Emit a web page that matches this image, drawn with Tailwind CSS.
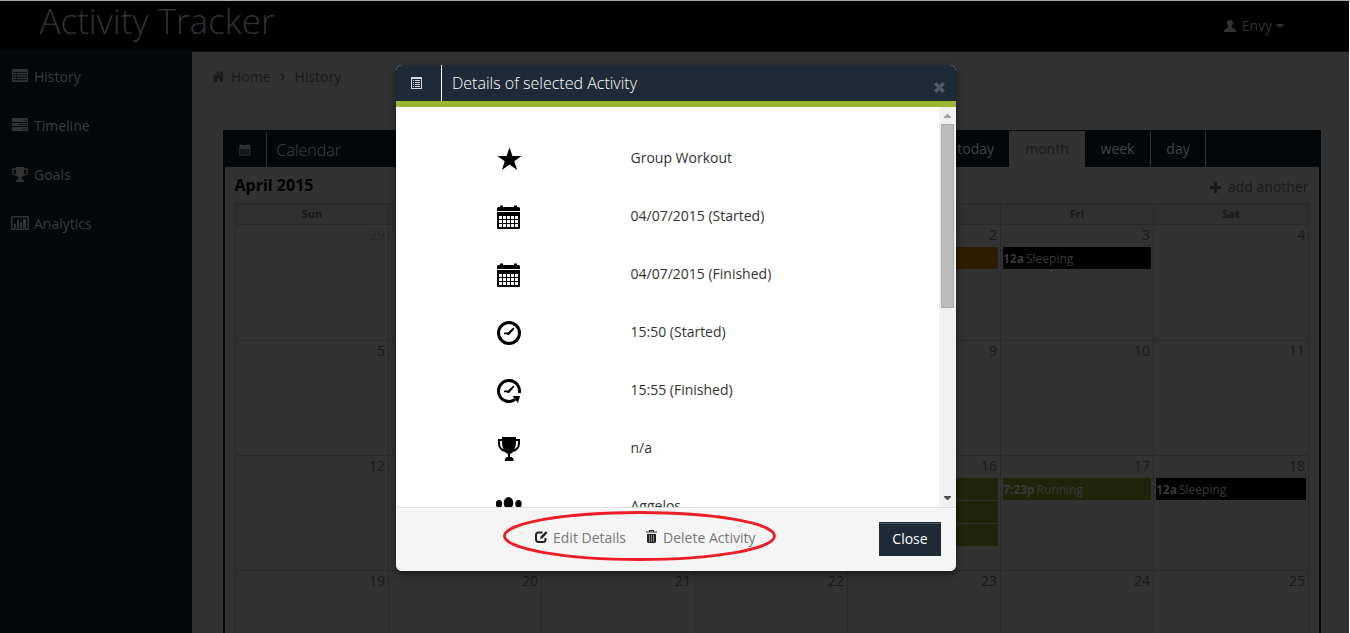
<!DOCTYPE html>
<html lang="en">
<head>
<meta charset="utf-8">
<title>Activity Tracker</title>
<script src="https://cdn.jsdelivr.net/npm/@tailwindcss/browser@4"></script>
</head>
<body class="bg-white">
<svg class="hidden">
  <symbol id="cal" viewBox="0 0 24 25"><path fill-rule="evenodd" d="M0 3.500Q0 2 1.500 2H3V.5h3V2h11V.5h3V2h1.500Q23 2 23 3.500V6H0zM0 7h23v16q0 1-1 1H1q-1 0-1-1zM2 11v3h3v-3zm4 0v3h3v-3zm4 0v3h3v-3zm4 0v3h3v-3zm4 0v3h3v-3zM2 15v3h3v-3zm4 0v3h3v-3zm4 0v3h3v-3zm4 0v3h3v-3zm4 0v3h3v-3zM2 19v3h3v-3zm4 0v3h3v-3zm4 0v3h3v-3zm4 0v3h3v-3zm4 0v3h3v-3z"/></symbol>
  <symbol id="cup" viewBox="0 0 24 24"><path fill-rule="evenodd" d="M5 0h14v2h4v4c0 5-3 8-7 9-.7.800-1.500 1.500-3 2v3h1.500q1 0 1.500 1.500h.5V24H8v-2.500h.5Q9 20 10 20h1v-3c-1.500-.5-2.300-1.200-3-2C4 14 1 11 1 6V2h4zM5 4H3v2c0 3 1.200 5.300 3.600 6.400C5.300 10 5 7 5 4zM19 4c0 3-.3 6-1.600 8.400C19.800 11.300 21 9 21 6V4z"/></symbol>
</svg>
<div class="relative flex h-[633px] w-[1350px] flex-col overflow-hidden bg-white font-['Open_Sans',sans-serif] text-sm">
  <div class="h-px bg-[#a9a9a9]"></div>
  <header class="mr-px flex h-[51px] shrink-0 justify-between border-b border-[#111] bg-black text-[#333]">
    <div class="pl-[39.500px] text-[35px] leading-[39px] font-light">Activity Tracker</div>
    <div class="mr-[65px] flex items-center"><svg class="mr-1.5 h-3 w-3" viewBox="0 0 12 12" fill="#333"><path d="M6 0c2 0 3 1.300 3 3 0 1.500-.6 2.600-1.500 3.600v1C9 8.500 12 9 12 10.500V12H0v-1.500C0 9 3 8.500 4.500 7.600v-1C3.600 5.600 3 4.500 3 3c0-1.700 1-3 3-3z"/></svg><span>Envy</span><span class="ml-1 border-x-4 border-t-4 border-x-transparent border-t-[#333]"></span></div>
  </header>
  <div class="mr-px flex min-h-0 flex-1">
    <nav class="flex w-48 shrink-0 flex-col bg-[#03070a] text-[#3c3c3c]">
      <a class="flex h-[49px] items-center gap-[5px] pl-3"><svg class="mb-0.5 h-[13px] w-[17px]" viewBox="0 0 17 13" fill="#333"><path fill-rule="evenodd" d="M1 0h14l1 1v11l-1 1H1l-1-1V1zM1.500 3.300v8h13v-8z"/><path d="M2 4h2v1.500H2zm2.500 0H14v1.500H4.500zM2 6.300h2v1.500H2zm2.500 0H14v1.500H4.500zM2 8.700h2v1.500H2zm2.500 0H14v1.500H4.500z"/></svg>History</a>
      <a class="flex h-[49px] items-center gap-[5px] pl-3"><svg class="mb-0.5 h-[13px] w-[17px]" viewBox="0 0 17 13" fill="#333"><path fill-rule="evenodd" d="M0 0h16v4H0zm12 1.700v.8h3v-.8zM0 5h16v3H0zm6 1v.8h9V6zM0 9h16v4H0zm10 1.800v.8h5v-.8z"/></svg>Timeline</a>
      <a class="flex h-[49px] items-center gap-[5px] pl-3"><svg class="h-[15px] w-[17px]" viewBox="0 0 17 15" fill="#333"><path fill-rule="evenodd" d="M4 0h8v1.500h4V4c0 3-2 4.700-5 5-.4.700-1 1.200-1.700 1.500V12Q12 12 12 14v1H4v-1q0-2 2.700-2v-1.500C6 10.200 5.400 9.700 5 9 2 8.700 0 7 0 4V1.500h4zM4 3H1.500v1c0 1.700 1 2.900 2.800 3.400C4 6.300 4 5 4 3zm8 0c0 2 0 3.300-.3 4.400C13.500 6.900 14.500 5.700 14.500 4V3z"/></svg>Goals</a>
      <a class="flex h-[49px] items-center gap-[4px] pl-[11px]"><svg class="mb-0.5 h-[14px] w-[19px]" viewBox="0 0 19 14" fill="#333"><path fill-rule="evenodd" d="M1 0h16l1 1v12l-1 1H1l-1-1V1zM1.500 1.500v11h15v-11z"/><path d="M3 8h2v4H3zm3-4h2v8H6zm3 2h2v6H9zm3-3h3v9h-3z"/></svg>Analytics</a>
    </nav>
    <main class="min-w-0 flex-1 bg-[#323232] text-[#191919]">
      <div class="flex h-[49px] items-center pl-5"><svg class="mr-1.5 h-[11px] w-[13px]" viewBox="0 0 13 11" fill="#191919"><path d="M6.500 0 9 2.200V.6h2v3.300l2 1.800-.7.800-5.800-5-5.800 5-.7-.8zM6.500 2.700 11 6.600V11H7.700V7.500H5.300V11H2V6.600z"/></svg>Home<svg class="mr-2.5 ml-[9px] h-2 w-[5px]" viewBox="0 0 5 8" fill="none" stroke="#191919" stroke-width="1.300"><path d="m1 .5 3 3.500-3 3.500"/></svg>History</div>
      <section class="mt-[29px] ml-[31px] flex h-[520px] w-[1098px] flex-col border-x-2 border-[#03070a]">
        <div class="flex h-[37px] shrink-0 bg-[#03070a] text-[#444]">
          <div class="mt-[2px] flex w-[42px] items-center justify-center border-r border-[#333]"><svg class="mr-px h-3 w-3" fill="#333"><use href="#cal"/></svg></div>
          <div class="flex-1 pl-[9.500px] text-base leading-[40px] font-light">Calendar</div>
          <div class="mt-px flex text-[#444]"><div class="w-[67px] pr-[15px] text-right leading-[36px]">today</div><div class="w-[76px] bg-[#323232] text-center leading-[36px] text-[#191919]">month</div><div class="h-[35px] w-[66px] border-r border-[#333] text-center leading-[36px]">week</div><div class="h-[35px] w-[55px] border-r border-[#333] text-center leading-[36px]">day</div></div>
          <div class="w-[113px]"></div>
        </div>
        <div class="flex h-9 shrink-0 justify-between pr-[10.500px] pl-[9.500px]"><b class="text-base leading-[36px] font-bold text-black">April 2015</b><span class="flex items-center pt-1"><svg class="mr-[7px] h-[11px] w-[11px]" viewBox="0 0 11 11" fill="#191919"><path d="M4 0h3v4h4v3H7v4H4V7H0V4h4z"/></svg>add another</span></div>
        <div class="ml-[10px] w-[1074px] border-t border-l border-[#292929]">
          <div class="grid h-[21px] grid-cols-[153px_153px_153px_153px_153px_153px_155px] border-b border-[#292929] bg-[#303030] text-center text-[11px] leading-[20px] font-bold"><div class="border-r border-[#292929]">Sun</div><div class="border-r border-[#292929]">Mon</div><div class="border-r border-[#292929]">Tue</div><div class="border-r border-[#292929]">Wed</div><div class="border-r border-[#292929]">Thu</div><div class="border-r border-[#292929]">Fri</div><div class="border-r border-[#292929]">Sat</div></div>
          <div id="weeks" class="grid grid-cols-[153px_153px_153px_153px_153px_153px_155px] grid-rows-[116px_115px_115px_115px]"></div>
        </div>
      </section>
    </main>
  </div>

  <div class="absolute top-[65px] left-[396px] flex h-[506px] w-[560px] flex-col overflow-hidden rounded-md bg-white text-[#333] shadow-[0_3px_7px_rgba(0,0,0,0.5)]">
    <div class="flex h-[42px] shrink-0 border-b-[6px] border-[#9ab52f] bg-[#1e2b37] text-white">
      <div class="flex w-[46px] items-center border-r border-white pl-[15px]"><svg class="h-3 w-[11px]" viewBox="0 0 11 12" fill="#d5d9dc"><path fill-rule="evenodd" d="M0 0h11v12H0zM1 2v9h9V2z"/><path d="M2 3h1v1H2zm2 0h5v1H4zM2 5h1v1H2zm2 0h5v1H4zM2 7h1v1H2zm2 0h5v1H4zM2 9h1v1H2zm2 0h5v1H4z"/></svg></div>
      <div class="flex-1 pl-[10px] text-base leading-[37px] font-light">Details of selected Activity</div>
      <svg class="mt-[17px] mr-[11px] h-[11px] w-[11px]" viewBox="0 0 11 11" stroke="#4d5963" stroke-width="3.600"><path d="m1.300 1.300 8.400 8.400m0-8.400L1.300 9.700"/></svg>
    </div>
    <div class="flex h-[400px] shrink-0 overflow-hidden">
      <div class="flex-1 pt-[22px]">
        <div class="flex h-[58px] items-center"><div class="w-[234.500px] pt-0.5 pl-[101px]"><svg class="h-6 w-[25px]" viewBox="0 0 24 24"><path d="m12 .5 3 8.500h9l-7.200 5.200L19.600 23 12 17.500 4.400 23l2.800-8.800L0 9h9z"/></svg></div>Group Workout</div>
        <div class="flex h-[58px] items-center"><div class="w-[234.500px] pt-0.5 pl-[101px]"><svg class="h-[25px] w-6"><use href="#cal"/></svg></div>04/07/2015 (Started)</div>
        <div class="flex h-[58px] items-center"><div class="w-[234.500px] pt-0.5 pl-[101px]"><svg class="h-[25px] w-6"><use href="#cal"/></svg></div>04/07/2015 (Finished)</div>
        <div class="flex h-[58px] items-center"><div class="w-[234.500px] pt-0.5 pl-[101px]"><svg class="h-6 w-6" viewBox="0 0 24 24"><circle cx="12" cy="12" r="10.500" fill="none" stroke="#000" stroke-width="3"/><path d="M16.300 6.500 17.500 7.700l-3.500 4L12 14h-1.500l-.5-.8H7v-1.700h4z"/></svg></div>15:50 (Started)</div>
        <div class="flex h-[58px] items-center"><div class="w-[234.500px] pt-0.5 pl-[101px]"><svg class="h-6 w-6" viewBox="0 0 24 24"><path fill="none" stroke="#000" stroke-width="3" d="M22.300 14A10.500 10.500 0 1 0 18 20.600"/><path d="M16.300 6.500 17.500 7.700l-3.500 4L12 14h-1.500l-.5-.8H7v-1.700h4zM15.500 17H23l-2 7z"/></svg></div>15:55 (Finished)</div>
        <div class="flex h-[58px] items-center"><div class="w-[234.500px] pt-0.5 pl-[101px]"><svg class="h-6 w-6"><use href="#cup"/></svg></div>n/a</div>
        <div class="flex h-[58px] items-center"><div class="w-[234.500px] pt-[5px] pl-[100px]"><svg class="h-6 w-[26px]" viewBox="0 0 26 24"><ellipse cx="3" cy="6.800" rx="3.200" ry="3.900"/><ellipse cx="22.500" cy="6.800" rx="3.200" ry="3.900"/><ellipse cx="12.500" cy="6" rx="4.800" ry="6"/><path d="M0 14h25v6H0z"/></svg></div>Aggelos</div>
      </div>
      <div class="flex w-[17px] flex-col items-center bg-[#f1f1f1]"><svg class="mt-[7px] mb-[6px] h-1 w-[7px]" viewBox="0 0 7 4" fill="#a3a3a3"><path d="M3 0h1l3 3v1H0V3z"/></svg><div class="h-[184px] w-[13px] border border-[#a8a8a8] bg-[#bcbcbc]"></div><svg class="mt-auto mb-[7px] h-1 w-[7px]" viewBox="0 0 7 4" fill="#505050"><path d="M0 0h7v1L4 4H3L0 1z"/></svg></div>
    </div>
    <div class="flex flex-1 items-start border-t border-[#ddd] bg-[#f5f5f5] text-[#777] shadow-[inset_0_1px_0_#fff]">
      <div class="flex h-[60px] items-center pl-[139px]"><svg class="mr-[5px] mb-0.5 h-3 w-[13px]" viewBox="0 0 13 12"><path fill="none" stroke="#222" stroke-width="2" d="M7.500 1.500h-4Q1 1.500 1 4v4q0 3 2.500 3H8q2.500 0 2.500-2.500V7"/><path fill="#222" d="m10.800.3 1.700 1.500-5 5.500-2.500 1 .7-2.700z"/></svg><span>Edit Details</span><svg class="mr-1.5 mb-[3px] ml-5 h-[13px] w-[11px]" viewBox="0 0 11 13" fill="#222"><path fill-rule="evenodd" d="M0 1.500h3V0h5v1.500h3v1H0zm4 0h3V1H4zM1 4h9v8l-1 1H2l-1-1z"/><path stroke="#aaa" stroke-width=".7" d="M3.500 5v7m2-7v7m2-7v7"/></svg><span>Delete Activity</span></div>
      <button class="mt-[14px] mr-[15px] ml-auto h-[34px] w-[62px] bg-[#1e2b37] pb-px text-white shadow-[inset_0_1px_0_#1e2b37,inset_0_2px_0_#4b5560]">Close</button>
    </div>
  </div>
  <svg class="absolute top-[508px] left-[500px]" width="280" height="56" fill="none" stroke="#ee1c25" stroke-width="2.800"><ellipse cx="139.500" cy="28" rx="135" ry="23.500"/></svg>
</div>
<script>
  // Weeks run Sunday to Saturday; event keys are "row-column".
  const weeks = [[29,30,31,1,2,3,4],[5,6,7,8,9,10,11],[12,13,14,15,16,17,18],[19,20,21,22,23,24,25]];
  // April 1 is a Wednesday, so Thursday to Saturday of the first week read 2, 3, 4.
  const ev = (cls, t, n) => `<div class="mb-px flex h-[22px] gap-[2px] overflow-hidden text-xs leading-[24px] whitespace-nowrap text-[#3a3a3a] ${cls}"><b>${t}</b><span>${n}</span></div>`;
  const events = {
    '0-4': ev('bg-[#2e1d00]', '', ''),
    '0-5': ev('bg-black', '12a', 'Sleeping'),
    '2-4': ev('bg-[#1f240a]', '', '') + ev('bg-[#1f240a]', '', '') + ev('bg-[#1f240a]', '', ''),
    '2-5': ev('bg-[#1f240a]', '7:23p', 'Running'),
    '2-6': ev('bg-black', '12a', 'Sleeping')
  };
  document.getElementById('weeks').innerHTML = weeks.map((w, r) => w.map((d, c) =>
    `<div class="border-r border-b border-[#292929] px-[2px]"><div class="h-[22px] pr-px text-right leading-[20px] ${r === 0 && c < 3 ? 'text-[#292929]' : ''}">${d}</div>${events[r + '-' + c] || ''}</div>`).join('')).join('');
</script>
</body>
</html>
